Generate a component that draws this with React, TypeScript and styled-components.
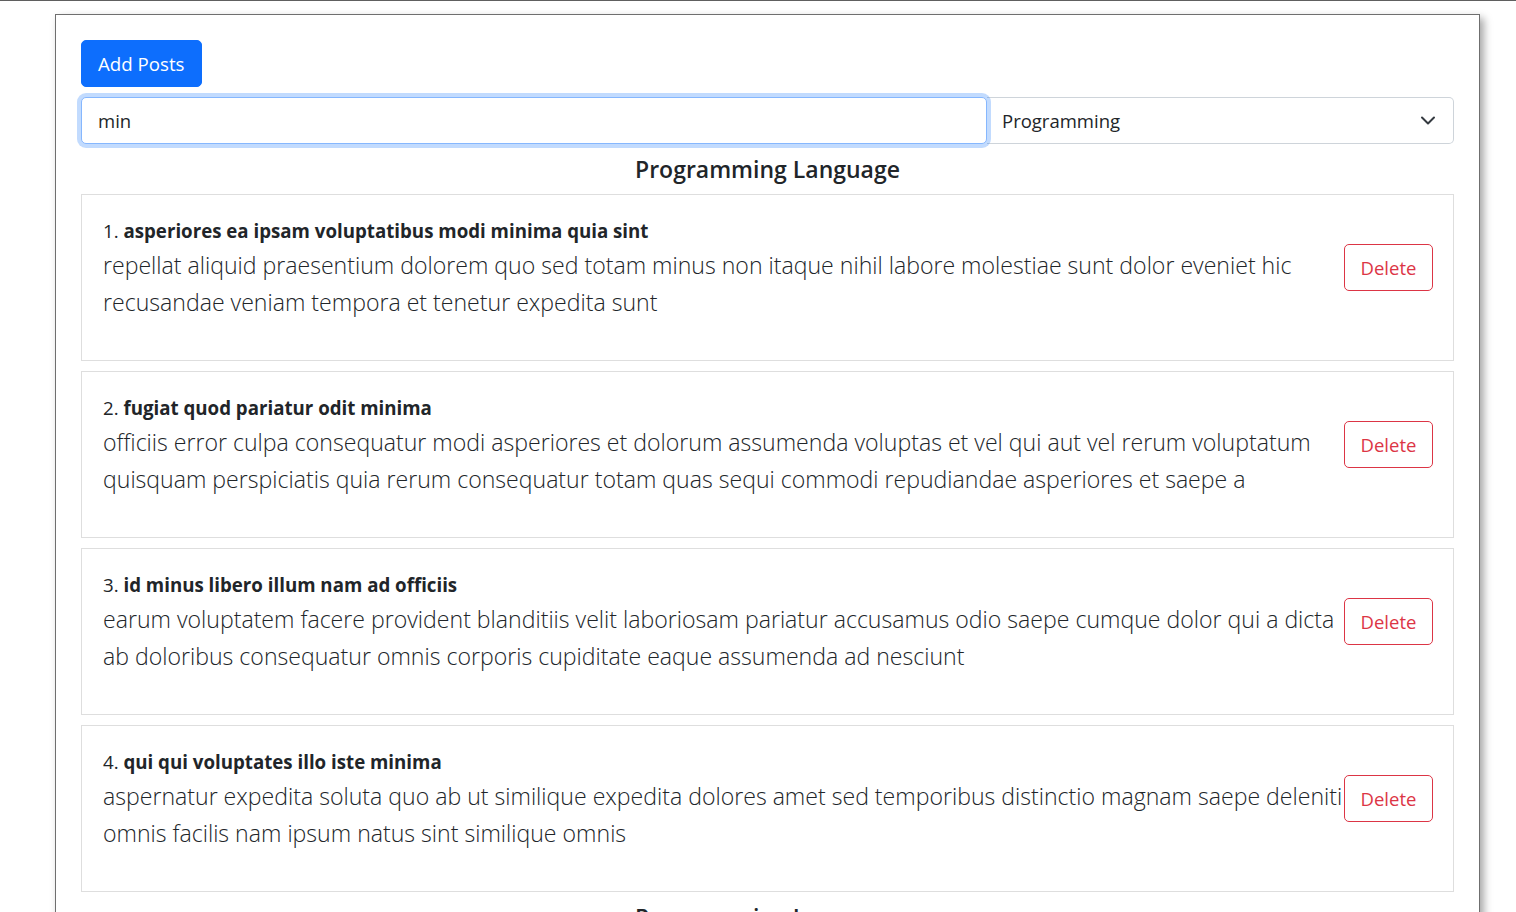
import React, { useState } from "react";
import styled, { createGlobalStyle } from "styled-components";

const GlobalStyle = createGlobalStyle`
  * { box-sizing: border-box; }
  body {
    margin: 0;
    background: #fff;
    color: #212529;
    font-family: "Open Sans", "Noto Sans", sans-serif;
  }
`;

const TopRule = styled.div`
  height: 1px;
  background: #5f5f5f;
`;

const Page = styled.div`
  width: 1425px;
  margin: 13px 0 0 55px;
  padding: 25px;
  border: 1px solid #6f6f6f;
  box-shadow: 4px 4px 8px rgba(0, 0, 0, 0.35);
  background: #fff;
`;

const PrimaryButton = styled.button`
  height: 47px;
  padding: 0 16px;
  border: 1px solid #0d6efd;
  border-radius: 5px;
  background: #0d6efd;
  color: #fff;
  font-family: inherit;
  font-size: 18.7px;
  cursor: pointer;
`;

const FilterRow = styled.div`
  display: flex;
  margin-top: 10px;
`;

const SearchInput = styled.input`
  flex: 1;
  height: 47px;
  padding: 0 16px;
  border: 1px solid #86b7fe;
  border-radius: 5px;
  box-shadow: 0 0 0 4px rgba(13, 110, 253, 0.25);
  font-family: inherit;
  font-size: 18.5px;
  color: #212529;
  outline: none;
  position: relative;
  z-index: 1;
`;

const SelectWrap = styled.div`
  position: relative;
  width: 467px;
  flex: none;
`;

const Select = styled.select`
  width: 100%;
  height: 47px;
  padding: 0 48px 0 15px;
  border: 1px solid #ced4da;
  border-left: none;
  border-radius: 0 5px 5px 0;
  appearance: none;
  background: #fff;
  font-family: inherit;
  font-size: 18.5px;
  color: #212529;
  outline: none;
`;

const Chevron = styled.svg`
  position: absolute;
  right: 18px;
  top: 17px;
  pointer-events: none;
`;

const SectionTitle = styled.h4`
  margin: 11px 0 10px;
  text-align: center;
  font-size: 23px;
  font-weight: 600;
  line-height: 29px;
`;

const PostList = styled.div`
  display: flex;
  flex-direction: column;
  gap: 10px;
`;

const Card = styled.div`
  display: flex;
  align-items: flex-start;
  height: 167px;
  padding: 21px 20px 20px 21px;
  border: 1px solid #dedede;
`;

const PostText = styled.div`
  flex: 1;
`;

const PostTitle = styled.div`
  font-size: 18.7px;
  line-height: 28px;
  margin-top: 1px;
`;

const PostBody = styled.p`
  margin: 2px 0 0;
  font-size: 23.1px;
  font-weight: 300;
  line-height: 37px;
`;

const DeleteButton = styled.button`
  flex: none;
  width: 89px;
  height: 47px;
  margin-top: 28px;
  border: 1px solid #dc3545;
  border-radius: 5px;
  background: #fff;
  color: #dc3545;
  font-family: inherit;
  font-size: 18.5px;
  padding: 0;
  cursor: pointer;
`;

const posts = [
  {
    id: 1,
    title: "asperiores ea ipsam voluptatibus modi minima quia sint",
    body: "repellat aliquid praesentium dolorem quo sed totam minus non itaque nihil labore molestiae sunt dolor eveniet hic recusandae veniam tempora et tenetur expedita sunt",
  },
  {
    id: 2,
    title: "fugiat quod pariatur odit minima",
    body: "officiis error culpa consequatur modi asperiores et dolorum assumenda voluptas et vel qui aut vel rerum voluptatum quisquam perspiciatis quia rerum consequatur totam quas sequi commodi repudiandae asperiores et saepe a",
  },
  {
    id: 3,
    title: "id minus libero illum nam ad officiis",
    body: "earum voluptatem facere provident blanditiis velit laboriosam pariatur accusamus odio saepe cumque dolor qui a dicta ab doloribus consequatur omnis corporis cupiditate eaque assumenda ad nesciunt",
  },
  {
    id: 4,
    title: "qui qui voluptates illo iste minima",
    body: "aspernatur expedita soluta quo ab ut similique expedita dolores amet sed temporibus distinctio magnam saepe deleniti omnis facilis nam ipsum natus sint similique omnis",
  },
];

const App = () => {
  const [query, setQuery] = useState("min");
  const [items, setItems] = useState(posts);

  const remove = (id: number) => {
    setItems(items.filter((p) => p.id !== id));
  };

  return (
    <>
      <GlobalStyle />
      <TopRule />
      <Page>
        <PrimaryButton>Add Posts</PrimaryButton>
        <FilterRow>
          <SearchInput value={query} onChange={(e) => setQuery(e.target.value)} />
          <SelectWrap>
            <Select defaultValue="programming">
              <option value="programming">Programming</option>
              <option value="design">Design</option>
            </Select>
            <Chevron width="16" height="12" viewBox="0 0 16 12">
              <path d="M2 3.5l6 6 6-6" fill="none" stroke="#343a40" strokeWidth="2" strokeLinecap="round" strokeLinejoin="round" />
            </Chevron>
          </SelectWrap>
        </FilterRow>
        <SectionTitle>Programming Language</SectionTitle>
        <PostList>
          {items.map((p, i) => (
            <Card key={p.id}>
              <PostText>
                <PostTitle>
                  {i + 1}. <strong>{p.title}</strong>
                </PostTitle>
                <PostBody>{p.body}</PostBody>
              </PostText>
              <DeleteButton onClick={() => remove(p.id)}>Delete</DeleteButton>
            </Card>
          ))}
        </PostList>
        <SectionTitle>Programming Language</SectionTitle>
        <PostList>
          {items.slice(0, 2).map((p, i) => (
            <Card key={p.id}>
              <PostText>
                <PostTitle>
                  {i + 1}. <strong>{p.title}</strong>
                </PostTitle>
                <PostBody>{p.body}</PostBody>
              </PostText>
              <DeleteButton>Delete</DeleteButton>
            </Card>
          ))}
        </PostList>
      </Page>
    </>
  );
};

export default App;
